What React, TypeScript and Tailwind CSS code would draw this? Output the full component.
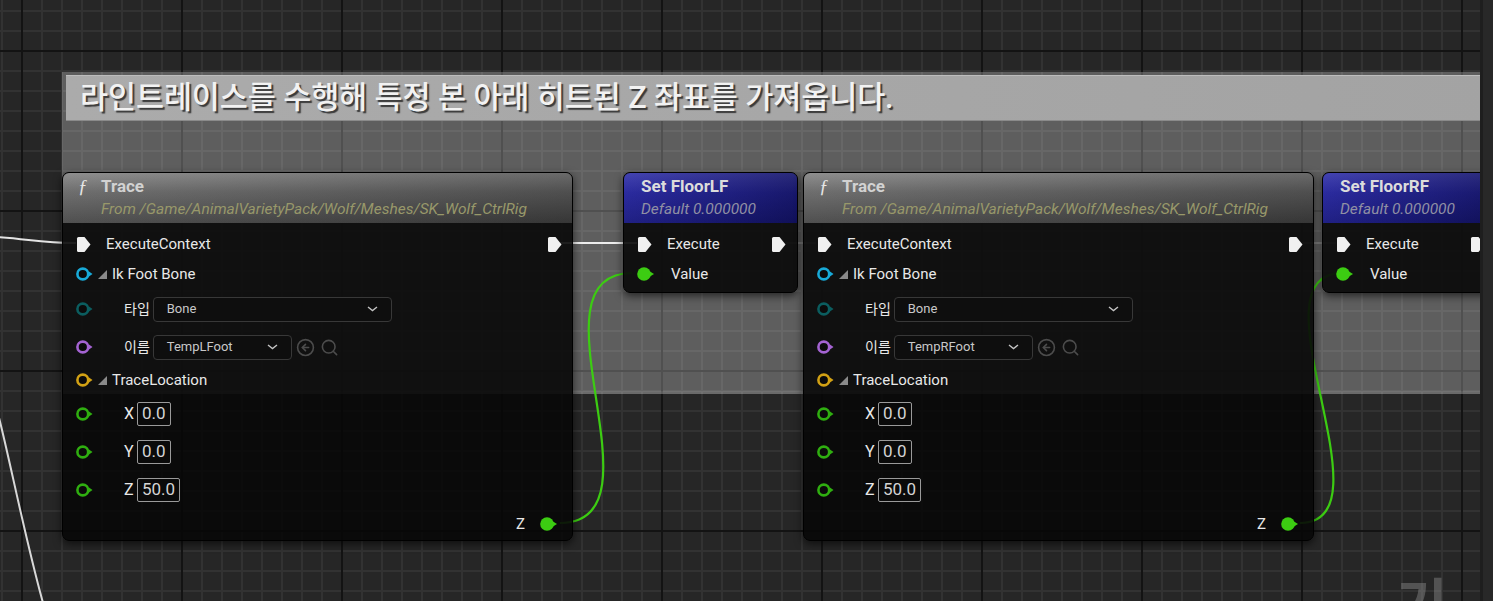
import React from 'react';
import { CircleArrowLeft, Search } from 'lucide-react';

const font = "font-['Roboto','Noto_Sans_CJK_KR',sans-serif]";

// 핀 모양들
const ExecPin = () => (
  <svg width="15" height="17" viewBox="0 0 15 17" className="shrink-0">
    <path d="M2.5 1 H8.5 L14.5 8.5 L8.5 16 H2.5 Q1 16 1 14.5 V2.5 Q1 1 2.5 1 Z" fill="#f0f0f0" />
  </svg>
);

const DataPin = ({ color }: { color: string }) => (
  <svg width="18" height="14" viewBox="0 0 18 14" className="shrink-0">
    <circle cx="6.8" cy="7" r="5.4" fill="#0b0b0b" stroke={color} strokeWidth="2.6" />
    <polygon points="13,4.6 16.5,7 13,9.4" fill={color} />
  </svg>
);

const FilledPin = ({ color }: { color: string }) => (
  <svg width="18" height="14" viewBox="0 0 18 14" className="shrink-0">
    <circle cx="7" cy="7" r="6.8" fill={color} />
    <polygon points="13,4.4 17,7 13,9.6" fill={color} />
  </svg>
);

const Expander = () => (
  <svg width="9" height="9" viewBox="0 0 9 9" className="shrink-0">
    <polygon points="9,0 9,9 0,9" fill="#8a8a8a" />
  </svg>
);

const Chevron = () => (
  <svg width="11" height="6" viewBox="0 0 11 6" className="shrink-0">
    <polyline points="1,1 5.5,4.5 10,1" fill="none" stroke="#c4c4c4" strokeWidth="1.4" />
  </svg>
);

const Dropdown = ({ value, width }: { value: string; width: string }) => (
  <div className={`${width} h-[25px] ml-[3px] flex items-center justify-between pl-[13px] pr-[13px] rounded-[4px] border border-[#383838] bg-[#0e0e0e]`}>
    <span className="text-[13px] text-[#c8c8c8]">{value}</span>
    <Chevron />
  </div>
);

const NumBox = ({ value }: { value: string }) => (
  <div className="h-[24px] ml-[2px] px-[4px] flex items-center rounded-[2px] border-[1.5px] border-[#9a9a9a] bg-[#0a0a0a] text-[17px] text-[#d4d4d4]">
    {value}
  </div>
);

const TraceNode = ({ left, bone }: { left: string; bone: string }) => (
  <div className={`absolute top-[172px] ${left} w-[511px] h-[369px] rounded-[7px] border border-black overflow-hidden bg-[rgba(8,8,8,0.9)] shadow-[0_3px_8px_rgba(0,0,0,0.6)]`}>
    {/* 헤더 */}
    <div className="h-[50px] pl-[15px] pt-[3px] bg-[linear-gradient(90deg,rgba(255,255,255,0.06),rgba(0,0,0,0.22)),linear-gradient(180deg,#888888_0%,#656565_38%,#454545_100%)]">
      <div className="flex items-center h-[22px]">
        <span className="w-[23px] text-[19px] italic text-[#e6e6e6] font-['Liberation_Serif',serif]">ƒ</span>
        <span className="text-[17px] font-bold text-[#d2d2d2]">Trace</span>
      </div>
      <div className="pl-[23px] text-[15.5px] italic text-[#98986a] leading-[22px]">
        From /Game/AnimalVarietyPack/Wolf/Meshes/SK_Wolf_CtrlRig
      </div>
    </div>

    <div className="pt-[6px] text-[15px] text-[#e8e8e8]">
      <div className="h-[30px] flex items-center pl-[13px] pr-[10px]">
        <ExecPin />
        <span className="ml-[15px] flex-1">ExecuteContext</span>
        <ExecPin />
      </div>
      <div className="h-[30px] flex items-center pl-[13px]">
        <DataPin color="#18aad8" />
        <span className="ml-[4px]"><Expander /></span>
        <span className="ml-[5px]">Ik Foot Bone</span>
      </div>
      <div className="h-[40px] flex items-center pl-[13px]">
        <DataPin color="#0b5d5f" />
        <span className="ml-[30px] text-[14px]">타입</span>
        <Dropdown value="Bone" width="w-[239px]" />
      </div>
      <div className="h-[36px] flex items-center pl-[13px]">
        <DataPin color="#a463d2" />
        <span className="ml-[30px] text-[14px]">이름</span>
        <Dropdown value={bone} width="w-[139px]" />
        <CircleArrowLeft size={19} strokeWidth={2} color="#4c4c4c" className="ml-[4px]" />
        <Search size={19} strokeWidth={2} color="#4c4c4c" className="ml-[5px]" />
      </div>
      <div className="h-[30px] flex items-center pl-[13px]">
        <DataPin color="#d2a114" />
        <span className="ml-[4px]"><Expander /></span>
        <span className="ml-[5px]">TraceLocation</span>
      </div>
      {[
        ['X', '0.0'],
        ['Y', '0.0'],
        ['Z', '50.0'],
      ].map(([axis, v]) => (
        <div key={axis} className="h-[38px] flex items-center pl-[13px] text-[16px]">
          <DataPin color="#2fae10" />
          <span className="ml-[30px] w-[11px]">{axis}</span>
          <NumBox value={v} />
        </div>
      ))}
      <div className="h-[30px] flex items-center justify-end pr-[14px]">
        <span className="mr-[15px] text-[15px]">Z</span>
        <FilledPin color="#3ccc12" />
      </div>
    </div>
  </div>
);

const SetNode = ({ left, title }: { left: string; title: string }) => (
  <div className={`absolute top-[172px] ${left} w-[175px] h-[121px] rounded-[7px] border border-black overflow-hidden bg-[rgba(10,10,10,0.92)] shadow-[0_3px_8px_rgba(0,0,0,0.6)]`}>
    <div className="h-[50px] pl-[17px] pt-[3px] bg-[linear-gradient(90deg,rgba(255,255,255,0.04),rgba(0,0,0,0.3)),linear-gradient(180deg,#3c3cae_0%,#22229a_40%,#17177f_100%)]">
      <div className="h-[22px] flex items-center text-[17px] font-bold text-[#dcdcdc]">{title}</div>
      <div className="text-[15.5px] italic text-[#9090a4] leading-[22px]">Default 0.000000</div>
    </div>
    <div className="pt-[6px] text-[15px] text-[#e8e8e8]">
      <div className="h-[30px] flex items-center pl-[13px] pr-[11px]">
        <ExecPin />
        <span className="ml-[15px] flex-1">Execute</span>
        <ExecPin />
      </div>
      <div className="h-[30px] flex items-center pl-[13px]">
        <FilledPin color="#3ccc12" />
        <span className="ml-[16px]">Value</span>
      </div>
    </div>
  </div>
);

export default function App() {
  return (
    <div
      className={`relative w-[1493px] h-[601px] overflow-hidden bg-[#262626] ${font} [background-image:linear-gradient(to_right,#131313_2px,transparent_2px),linear-gradient(to_bottom,#131313_2px,transparent_2px),linear-gradient(to_right,#323232_2px,transparent_2px),linear-gradient(to_bottom,#323232_2px,transparent_2px)] [background-size:160px_160px,160px_160px,20px_20px,20px_20px] [background-position:21px_50px,21px_50px,1px_10px,1px_10px]`}
    >
      {/* 코멘트 박스 */}
      <div className="absolute left-[62px] top-[72px] w-[1430px] h-[322px] bg-[rgba(255,255,255,0.26)] pt-[3px] pl-[4px] border-b-[3px] border-[rgba(255,255,255,0.08)]">
        <div className="h-[46px] flex items-center pl-[14px] bg-[linear-gradient(90deg,#ababab,#a3a3a3)] border-b border-[#8a8a8a] border-t border-t-[#bdbdbd]">
          <span className="text-[30.5px] font-medium text-[#f2f2f2] [text-shadow:2px_2px_1px_#3a3a3a] tracking-[-0.1px]">
            라인트레이스를 수행해 특정 본 아래 히트된 Z 좌표를 가져옵니다.
          </span>
        </div>
      </div>

      {/* 연결선 */}
      <svg className="absolute inset-0 pointer-events-none" width="1493" height="601">
        <path d="M-2 237 C30 239 40 243 76 243" stroke="#e4e4e4" strokeWidth="2" fill="none" />
        <path d="M-3 410 C8 450 25 540 45 610" stroke="#d8d8d8" strokeWidth="2" fill="none" />
        <path d="M560 243 L637 243" stroke="#ececec" strokeWidth="2" fill="none" />
        <path d="M784 243 L816 243" stroke="#8a8a8a" strokeWidth="1.5" fill="none" />
        <path d="M1302 243 L1336 243" stroke="#8a8a8a" strokeWidth="1.5" fill="none" />
        <path d="M560 523 C670 523 522 273 632 273" stroke="#3ccc12" strokeWidth="2.2" fill="none" />
        <path d="M1300 523 C1395 523 1247 273 1342 273" stroke="#3ccc12" strokeWidth="2.2" fill="none" />
      </svg>

      <TraceNode left="left-[62px]" bone="TempLFoot" />
      <SetNode left="left-[623px]" title="Set FloorLF" />
      <TraceNode left="left-[803px]" bone="TempRFoot" />
      <SetNode left="left-[1322px]" title="Set FloorRF" />

      <div className="absolute left-[1396px] top-[578px] text-[56px] font-bold leading-none text-[rgba(140,140,140,0.45)]">기</div>

      {/* 오른쪽 가장자리 */}
      <div className="absolute right-0 top-0 w-[13px] h-full bg-[#282828] border-l-[3px] border-[#1e1e1e]" />
    </div>
  );
}
